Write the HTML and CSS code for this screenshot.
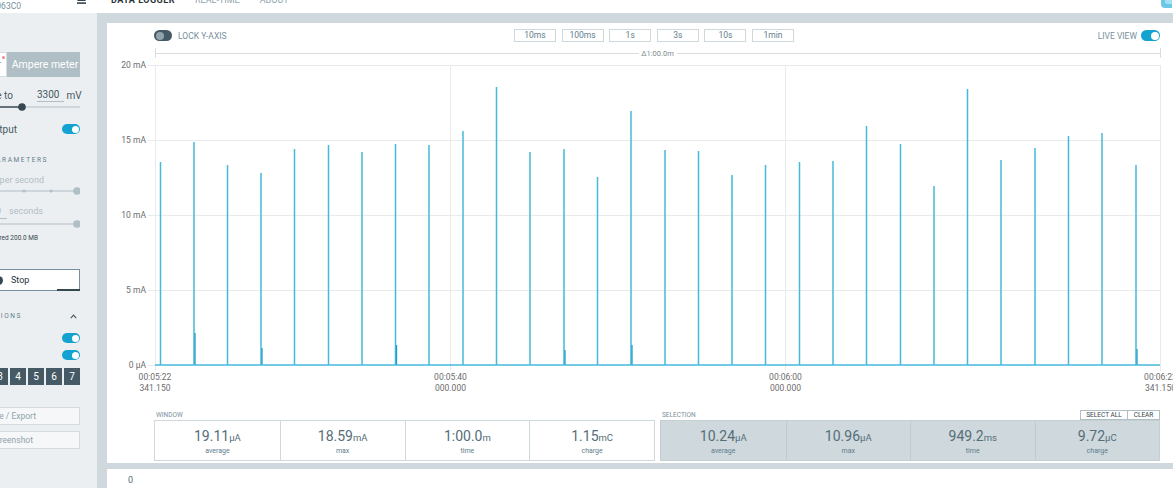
FILE: index.html
```html
<!DOCTYPE html>
<html>
<head>
<meta charset="utf-8">
<title>Power Profiler - Data logger</title>
<link rel="stylesheet" href="styles.css">
</head>
<body>
<header class="topbar">
  <div class="device">PPK2 C8D063C0</div>
  <svg class="eject" width="9" height="10" viewBox="0 0 9 10"><polygon points="4.5,0 9,6 0,6" fill="#37474f"/><rect x="0" y="7.3" width="9" height="1.6" fill="#37474f"/></svg>
  <nav class="nav">
    <span class="nav-item active">DATA LOGGER</span>
    <span class="nav-item">REAL-TIME</span>
    <span class="nav-item">ABOUT</span>
  </nav>
  <svg class="corner" width="12" height="8" viewBox="0 0 12 8"><path d="M1 0 H12 V8 H5 Q1 8 1 4 Z" fill="#6cc8e6"/><path d="M5 0 H12 V4 H8 Q5 4 5 1.5 Z" fill="#a6e0f2"/></svg>
</header>

<div class="workspace">
  <aside class="side">
    <div class="side-in">
      <div class="seg">
        <div class="seg-src">Source meter<span class="dot"></span></div>
        <div class="seg-amp">Ampere meter</div>
      </div>

      <div class="row volt">
        <span class="lbl w133">Set supply voltage to</span>
        <span class="vin">3300</span>
        <span class="unit">mV</span>
      </div>
      <svg class="slider" width="200" height="8" viewBox="0 0 200 8"><line x1="0" y1="4" x2="142" y2="4" stroke="#37474f" stroke-width="1.4"/><line x1="142" y1="4" x2="200" y2="4" stroke="#b0bec5" stroke-width="1"/><circle cx="142" cy="4" r="3.8" fill="#37474f"/></svg>

      <div class="row pwr">
        <span class="lbl w137">Enable power output</span>
        <span class="tog"></span>
      </div>

      <div class="row head1"><span class="lbl sect w168">SAMPLING PARAMETERS</span></div>

      <div class="row rate"><span class="lbl light w164">samples per second</span></div>
      <svg class="slider" width="200" height="8" viewBox="0 0 200 8"><line x1="0" y1="4" x2="197" y2="4" stroke="#b0bec5" stroke-width="1"/><circle cx="144" cy="4" r="1.6" fill="#b0bec5"/><circle cx="171" cy="4" r="1.6" fill="#b0bec5"/><circle cx="197" cy="4" r="3.8" fill="#b0bec5"/></svg>

      <div class="row dur">
        <span class="din">10</span>
        <span class="lbl light sec">seconds</span>
      </div>
      <svg class="slider s2" width="200" height="8" viewBox="0 0 200 8"><line x1="0" y1="4" x2="197" y2="4" stroke="#b0bec5" stroke-width="1"/><circle cx="197" cy="4" r="3.8" fill="#b0bec5"/></svg>

      <div class="row disk"><span class="lbl small w158">Estimated disk space required 200.0 MB</span></div>

      <div class="stop"><span class="stop-ic"></span><span>Stop</span></div>

      <div class="row head2">
        <span class="lbl sect w142">DISPLAY OPTIONS</span>
        <svg class="chev" width="7" height="5" viewBox="0 0 7 5"><polyline points="0.8,4.2 3.5,1.2 6.2,4.2" fill="none" stroke="#455a64" stroke-width="1.2"/></svg>
      </div>

      <div class="row tg1"><span class="tog"></span></div>
      <div class="row tg2"><span class="tog"></span></div>

      <div class="digits">
        <span>0</span><span>1</span><span>2</span><span>3</span><span>4</span><span>5</span><span>6</span><span>7</span>
      </div>

      <div class="sbtn b1">Save / Export</div>
      <div class="sbtn b2">Screenshot</div>
    </div>
  </aside>

  <main class="main">
    <section class="panel">
      <div class="toolbar">
        <div class="tb-left"><span class="tog off"></span><span class="tb-txt">LOCK Y-AXIS</span></div>
        <div class="zoombtns">
          <span class="zb">10ms</span><span class="zb">100ms</span><span class="zb">1s</span><span class="zb">3s</span><span class="zb">10s</span><span class="zb">1min</span>
        </div>
        <div class="tb-right"><span class="tb-txt">LIVE VIEW</span><span class="tog"></span></div>
      </div>

      <svg class="chart" width="1066" height="350" viewBox="107 45 1066 350">
        <g class="span" stroke="#d9dde0" stroke-width="1">
          <line x1="155.5" y1="48" x2="155.5" y2="58"/>
          <line x1="1160.5" y1="48" x2="1160.5" y2="58"/>
          <line x1="155" y1="53.5" x2="639" y2="53.5"/>
          <line x1="677" y1="53.5" x2="1160" y2="53.5"/>
        </g>
        <text class="span-t" x="657.5" y="56" text-anchor="middle">Δ1:00.0m</text>

        <g class="grid" stroke="#e8eaeb" stroke-width="1">
          <line x1="148" y1="65.5" x2="1160" y2="65.5"/>
          <line x1="148" y1="140.5" x2="1160" y2="140.5"/>
          <line x1="148" y1="215.5" x2="1160" y2="215.5"/>
          <line x1="148" y1="290.5" x2="1160" y2="290.5"/>
          <line x1="148" y1="365.5" x2="155" y2="365.5"/>
          <line x1="450.5" y1="65" x2="450.5" y2="371"/>
          <line x1="785.5" y1="65" x2="785.5" y2="371"/>
          <line x1="1160.5" y1="65" x2="1160.5" y2="371"/>
          <line x1="155.5" y1="65" x2="155.5" y2="371"/>
        </g>

        <g class="ylab">
          <text x="146" y="68" text-anchor="end">20 mA</text>
          <text x="146" y="143" text-anchor="end">15 mA</text>
          <text x="146" y="218" text-anchor="end">10 mA</text>
          <text x="146" y="293" text-anchor="end">5 mA</text>
          <text x="146" y="368" text-anchor="end">0 µA</text>
        </g>

        <g class="spikes" stroke="#45b9da" stroke-width="1.5">
          <line x1="160.5" y1="365" x2="160.5" y2="162"/>
          <line x1="194" y1="365" x2="194" y2="142"/>
          <line x1="227.5" y1="365" x2="227.5" y2="165"/>
          <line x1="261" y1="365" x2="261" y2="173"/>
          <line x1="294.5" y1="365" x2="294.5" y2="149"/>
          <line x1="328.5" y1="365" x2="328.5" y2="145"/>
          <line x1="362" y1="365" x2="362" y2="152"/>
          <line x1="395.5" y1="365" x2="395.5" y2="144"/>
          <line x1="429" y1="365" x2="429" y2="145"/>
          <line x1="463" y1="365" x2="463" y2="131"/>
          <line x1="496.5" y1="365" x2="496.5" y2="87"/>
          <line x1="530" y1="365" x2="530" y2="152"/>
          <line x1="564" y1="365" x2="564" y2="149"/>
          <line x1="597.5" y1="365" x2="597.5" y2="177"/>
          <line x1="631" y1="365" x2="631" y2="111"/>
          <line x1="665" y1="365" x2="665" y2="150"/>
          <line x1="698.5" y1="365" x2="698.5" y2="151"/>
          <line x1="732" y1="365" x2="732" y2="175"/>
          <line x1="765.5" y1="365" x2="765.5" y2="165"/>
          <line x1="799.5" y1="365" x2="799.5" y2="162"/>
          <line x1="833" y1="365" x2="833" y2="161"/>
          <line x1="866.5" y1="365" x2="866.5" y2="126"/>
          <line x1="900.5" y1="365" x2="900.5" y2="144"/>
          <line x1="934" y1="365" x2="934" y2="186"/>
          <line x1="967.5" y1="365" x2="967.5" y2="89"/>
          <line x1="1001" y1="365" x2="1001" y2="160"/>
          <line x1="1035" y1="365" x2="1035" y2="148"/>
          <line x1="1068.5" y1="365" x2="1068.5" y2="136"/>
          <line x1="1102" y1="365" x2="1102" y2="133"/>
          <line x1="1136" y1="365" x2="1136" y2="165"/>
        </g>
        <g class="minor" stroke="#1f9dc6" stroke-width="1.3">
          <line x1="195" y1="365" x2="195" y2="333"/>
          <line x1="262" y1="365" x2="262" y2="348"/>
          <line x1="396.5" y1="365" x2="396.5" y2="345"/>
          <line x1="565" y1="365" x2="565" y2="350"/>
          <line x1="632" y1="365" x2="632" y2="345"/>
          <line x1="1137" y1="365" x2="1137" y2="349"/>
        </g>
        <line x1="155" y1="365" x2="1160" y2="365" stroke="#45b9da" stroke-width="1.5"/>

        <g class="xlab">
          <text x="155" y="380" text-anchor="middle">00:05:22</text>
          <text x="155" y="391" text-anchor="middle">341.150</text>
          <text x="450.5" y="380" text-anchor="middle">00:05:40</text>
          <text x="450.5" y="391" text-anchor="middle">000.000</text>
          <text x="785.5" y="380" text-anchor="middle">00:06:00</text>
          <text x="785.5" y="391" text-anchor="middle">000.000</text>
          <text x="1160.5" y="380" text-anchor="middle">00:06:22</text>
          <text x="1160.5" y="391" text-anchor="middle">341.150</text>
        </g>
      </svg>

      <div class="stats">
        <div class="group win">
          <div class="ghead"><span class="glabel">WINDOW</span></div>
          <div class="box">
            <div class="cell"><div class="val">19.11<small>µA</small></div><div class="cap">average</div></div>
            <div class="cell"><div class="val">18.59<small>mA</small></div><div class="cap">max</div></div>
            <div class="cell"><div class="val">1:00.0<small>m</small></div><div class="cap">time</div></div>
            <div class="cell"><div class="val">1.15<small>mC</small></div><div class="cap">charge</div></div>
          </div>
        </div>
        <div class="group sel">
          <div class="ghead">
            <span class="glabel">SELECTION</span>
            <div class="selbtns"><span class="selbtn">SELECT ALL</span><span class="selbtn">CLEAR</span></div>
          </div>
          <div class="box shaded">
            <div class="cell"><div class="val">10.24<small>µA</small></div><div class="cap">average</div></div>
            <div class="cell"><div class="val">10.96<small>µA</small></div><div class="cap">max</div></div>
            <div class="cell"><div class="val">949.2<small>ms</small></div><div class="cap">time</div></div>
            <div class="cell"><div class="val">9.72<small>µC</small></div><div class="cap">charge</div></div>
          </div>
        </div>
      </div>
    </section>
    <section class="footer">0</section>
  </main>
</div>
</body>
</html>
```

FILE: styles.css
```css
* { box-sizing: border-box; margin: 0; padding: 0; }
html, body { width: 1173px; height: 488px; overflow: hidden; }
body {
  font-family: Roboto, "Liberation Sans", sans-serif;
  background: #cfd8dc;
  color: #37474f;
}

/* top bar */
.topbar {
  height: 13px;
  background: #fff;
  display: flex;
  align-items: flex-start;
  overflow: hidden;
}
.device {
  flex: none;
  width: 120px;
  margin-left: -99px;
  margin-top: 2px;
  text-align: right;
  font-size: 8.5px;
  line-height: 9px;
  color: #78909c;
  white-space: nowrap;
}
.eject { flex: none; margin-left: 56px; margin-top: -5px; }
.nav {
  display: flex;
  gap: 20px;
  margin-left: 25px;
  margin-top: -4.5px;
  font-size: 9px;
  line-height: 9px;
  color: #90a4ae;
  white-space: nowrap;
}
.nav-item.active { color: #263238; font-weight: 700; letter-spacing: 0.5px; }
.corner { flex: none; margin-left: auto; margin-right: 1px; }

/* workspace */
.workspace { display: flex; height: 475px; }
.side {
  flex: none;
  width: 97px;
  background: #eceff1;
  overflow: hidden;
}
.side-in {
  width: 200px;
  margin-left: -120px;
  display: flex;
  flex-direction: column;
  font-size: 10px;
  color: #455a64;
}
.row { display: flex; align-items: center; white-space: nowrap; }
.lbl { flex: none; text-align: right; white-space: nowrap; }
.w133 { width: 133px; }
.w137 { width: 137px; }
.w168 { width: 168px; }
.w164 { width: 164px; }
.w158 { width: 158px; }
.w142 { width: 142px; }

.seg { display: flex; height: 25px; margin-top: 39px; }
.seg-src {
  position: relative;
  width: 87px;
  margin-left: 40px;
  background: #fff;
  border: 1px solid #d5dde1;
  padding-right: 5px;
  text-align: right;
  line-height: 23px;
  font-size: 10.5px;
  color: #90a4ae;
  white-space: nowrap;
}
.dot {
  position: absolute;
  right: 1px;
  top: 3px;
  width: 3px;
  height: 3px;
  border-radius: 50%;
  background: #ef8a8a;
}
.seg-amp {
  width: 73px;
  background: #b0bec5;
  color: #fff;
  font-size: 10.5px;
  line-height: 25px;
  text-align: center;
  white-space: nowrap;
  padding-left: 3px;
}

.volt { height: 14px; margin-top: 11px; }
.vin {
  width: 31px;
  height: 14px;
  margin-left: 24px;
  border-bottom: 1px solid #b0bec5;
  text-align: right;
  padding-right: 5px;
  line-height: 13px;
}
.unit { margin-left: 2px; }
.slider { display: block; margin-top: 1px; }

.pwr { height: 14px; margin-top: 11px; }
.tog {
  flex: none;
  position: relative;
  display: inline-block;
  width: 18px;
  height: 10px;
  border-radius: 5px;
  background: #14a2d0;
  margin-left: auto;
}
.tog::after {
  content: "";
  position: absolute;
  top: 1.5px;
  right: 1.5px;
  width: 7px;
  height: 7px;
  border-radius: 50%;
  background: #fff;
}
.tog.off { background: #455a64; margin-left: 0; }
.tog.off::after { right: auto; left: 1.5px; background: #90a4ae; }

.head1 { height: 10px; margin-top: 19px; }
.sect { font-size: 6.5px; letter-spacing: 1.6px; color: #607d8b; line-height: 10px; }
.rate { height: 12px; margin-top: 9px; }
.light { color: #b0bec5; font-size: 9px; }
.dur { height: 14px; margin-top: 10px; align-items: flex-start; }
.din {
  width: 27px;
  height: 14px;
  margin-left: 100px;
  border-bottom: 1px solid #b0bec5;
  text-align: right;
  padding-right: 6px;
  font-size: 9px;
  line-height: 12px;
  color: #b0bec5;
}
.sec { margin-left: 2px; line-height: 12px; }
.disk { height: 9px; margin-top: 6px; }
.small { font-size: 6.5px; color: #37474f; line-height: 9px; }

.stop {
  position: relative;
  display: flex;
  align-items: center;
  height: 22px;
  width: 140px;
  margin-left: 60px;
  margin-top: 26px;
  background: #fff;
  border: 1px solid #78909c;
  padding-left: 53px;
  font-size: 9px;
  color: #263238;
}
.stop::after {
  content: "";
  position: absolute;
  right: -1px;
  bottom: -1px;
  width: 23px;
  height: 2px;
  background: #37474f;
}
.stop-ic {
  width: 9px;
  height: 9px;
  border-radius: 50%;
  background: #37474f;
  margin-right: 8px;
  flex: none;
}

.head2 { height: 10px; margin-top: 20px; }
.chev { margin-left: auto; margin-right: 3px; }
.tg1 { height: 10px; margin-top: 12px; }
.tg2 { height: 10px; margin-top: 7px; }

.digits {
  display: flex;
  justify-content: flex-end;
  gap: 2px;
  height: 17px;
  margin-top: 8px;
}
.digits span {
  width: 16px;
  height: 17px;
  background: #455a64;
  color: #fff;
  font-size: 10px;
  line-height: 17px;
  text-align: center;
}

.sbtn {
  height: 18px;
  margin-left: 40px;
  width: 160px;
  background: #f5f7f8;
  border: 1px solid #d3dbdf;
  color: #90a4ae;
  font-size: 8.5px;
  line-height: 16px;
  text-align: right;
  white-space: nowrap;
}
.b1 { margin-top: 22px; padding-right: 43px; }
.b2 { margin-top: 6px; padding-right: 46px; }

/* main */
.main {
  flex: 1;
  margin-left: 10px;
  padding-top: 10px;
  display: flex;
  flex-direction: column;
  gap: 6px;
}
.panel {
  height: 444px;
  background: #fff;
  display: flex;
  flex-direction: column;
}
.footer {
  flex: 1;
  background: #fff;
  padding: 4px 0 0 21px;
  font-size: 9px;
  line-height: 15px;
  color: #546e7a;
}

.toolbar {
  display: grid;
  grid-template-columns: 1fr auto 1fr;
  align-items: center;
  height: 13px;
  margin: 6px 13px 0 47px;
}
.tb-left, .tb-right { display: flex; align-items: center; }
.tb-right { justify-content: flex-end; }
.tb-txt { font-size: 8.5px; color: #78909c; white-space: nowrap; }
.tb-left .tb-txt { margin-left: 6px; }
.tb-right .tb-txt { margin-right: 4px; }
.tb-right .tog { margin-left: 0; width: 19px; height: 11px; border-radius: 6px; }
.tb-right .tog::after { width: 8px; height: 8px; }
.tb-left .tog { width: 18px; height: 11px; border-radius: 6px; }
.tb-left .tog::after { width: 8px; height: 8px; }

.zoombtns { display: flex; gap: 5.6px; margin-right: 6px; }
.zb {
  width: 42px;
  height: 13px;
  border: 1px solid #cfd8dc;
  font-size: 8.5px;
  line-height: 11px;
  text-align: center;
  color: #607d8b;
}

.chart { display: block; margin-top: 3px; }
.chart text { font-family: Roboto, "Liberation Sans", sans-serif; font-size: 8.5px; fill: #6b6b6b; }
.chart .span-t { font-size: 7.5px; fill: #7b8a91; }

/* stats */
.stats {
  display: flex;
  gap: 5px;
  margin: 15px 13px 0 47px;
}
.group { display: flex; flex-direction: column; }
.group.win { width: 501px; }
.group.sel { width: 500px; }
.ghead {
  height: 10px;
  display: flex;
  justify-content: space-between;
  align-items: flex-end;
}
.glabel {
  font-size: 6.5px;
  line-height: 8px;
  color: #78909c;
  padding-left: 2px;
  padding-bottom: 1px;
}
.selbtns { display: flex; height: 10px; }
.selbtn {
  height: 10px;
  border: 1px solid #b0bec5;
  font-size: 6.5px;
  line-height: 8px;
  color: #37474f;
  background: #fff;
  text-align: center;
}
.selbtn + .selbtn { border-left: none; }
.selbtns .selbtn:first-child { width: 48px; }
.selbtns .selbtn:last-child { width: 32px; }

.box {
  height: 41px;
  display: grid;
  grid-template-columns: repeat(4, 1fr);
  border: 1px solid #cfd8dc;
}
.box.shaded { background: #cfd8dc; border-color: #c4cfd4; }
.cell {
  display: flex;
  flex-direction: column;
  align-items: center;
  padding-top: 8px;
  border-left: 1px solid #cfd8dc;
}
.cell:first-child { border-left: none; }
.shaded .cell { border-left-color: #bfcbd1; }
.val {
  font-size: 14px;
  line-height: 14px;
  color: #546e7a;
  white-space: nowrap;
}
.val small { font-size: 9.5px; }
.cap {
  margin-top: 1.5px;
  font-size: 7px;
  line-height: 8px;
  color: #607d8b;
}
```
